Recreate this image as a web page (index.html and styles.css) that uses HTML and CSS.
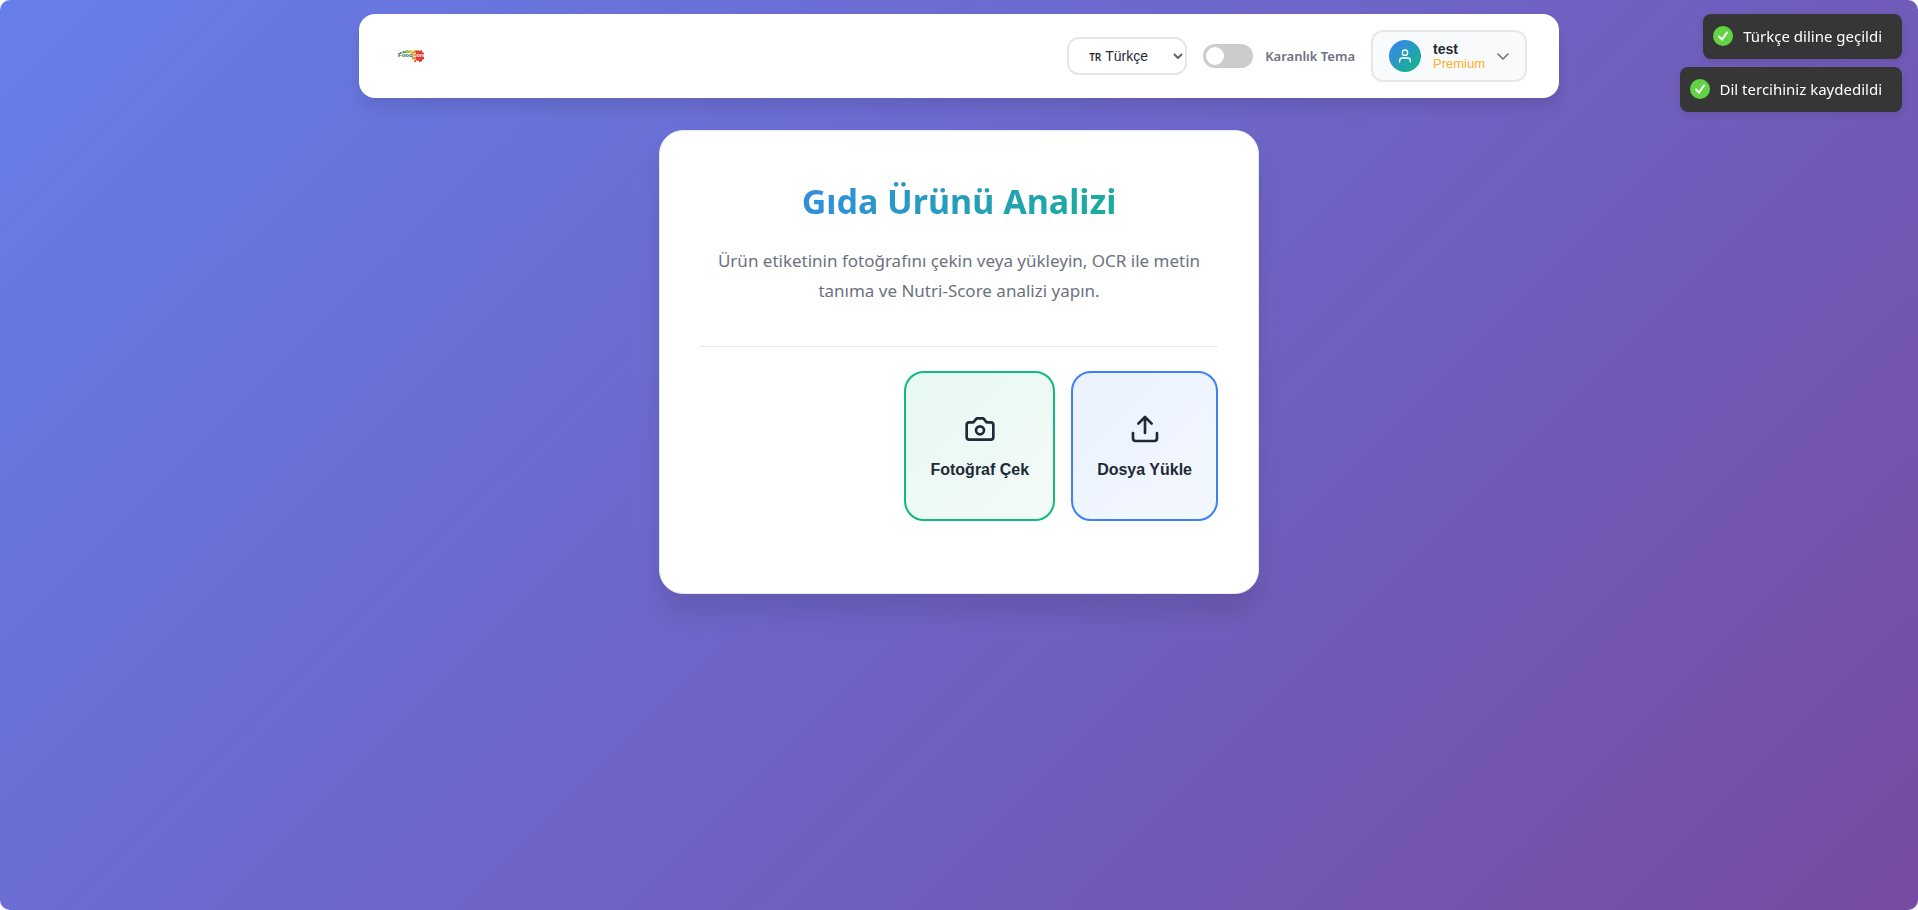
FILE: index.html
```html
<!DOCTYPE html>
<html lang="tr">
<head>
<meta charset="utf-8">
<meta name="viewport" content="width=device-width, initial-scale=1">
<title>Gıda Ürünü Analizi</title>
<link rel="stylesheet" href="styles.css">
</head>
<body>
<div class="app">
  <header class="header">
    <a class="logo" href="#" aria-label="FoodCore">
      <svg width="28" height="16" viewBox="0 -1 28 16">
        <path d="M2 4V3l2 .5L5 2l2 .5L9 1l2 1 2-1v3H2z" fill="#3f9b3a"/>
        <path d="M8 4V2l2-1 1 1.500 2-1.200 1 1V4H8z" fill="#a5cf3a"/>
        <path d="M12 4V1h1.500v1l1.500-.5V4h-3z" fill="#f8cc3c"/>
        <path d="M14 4l2-2.500 2-.5 2 .5V10l-2 2-1-2-3 .5z" fill="#f28a35"/>
        <path d="M18 4V2l2-.5 2 .5 2-1v2l2 1v6l-2 1v1.500h-1.500V13H21v-1.500l-2 .5-1-2z" fill="#e23a34"/>
        <path d="M16 11h2v2l-1 .5-1-1z" fill="#ec6b3a"/>
        <text class="logo-food" x="0" y="8">Food</text>
        <text class="logo-core" x="14" y="8">Core</text>
      </svg>
    </a>
    <div class="controls">
      <div class="language">
        <span class="language-code">TR</span>
        <select class="language-select" aria-label="Dil">
          <option>Türkçe</option>
          <option>English</option>
        </select>
        <svg class="language-arrow" width="10" height="6" viewBox="0 0 10 6" fill="none" stroke="currentColor" stroke-width="2"><path d="m1 1 4 4 4-4"/></svg>
      </div>
      <label class="theme">
        <input class="switch" type="checkbox">
        <span>Karanlık Tema</span>
      </label>
      <button class="user" type="button">
        <span class="avatar">
          <svg width="16" height="16" viewBox="0 0 24 24" fill="none" stroke="currentColor" stroke-width="2" stroke-linecap="round" stroke-linejoin="round"><path d="M20 21v-2a4 4 0 0 0-4-4H8a4 4 0 0 0-4 4v2"/><circle cx="12" cy="7" r="4"/></svg>
        </span>
        <span class="user-text">
          <span class="user-name">test</span>
          <span class="user-plan">Premium</span>
        </span>
        <svg class="chevron" width="12" height="8" viewBox="0 0 12 8" fill="none" stroke="currentColor" stroke-width="1.500" stroke-linecap="round" stroke-linejoin="round"><path d="m1 2 5 5 5-5"/></svg>
      </button>
    </div>
  </header>

  <main class="card">
    <div class="intro">
      <h1 class="title">Gıda Ürünü Analizi</h1>
      <p class="lead">Ürün etiketinin fotoğrafını çekin veya yükleyin, OCR ile metin tanıma ve Nutri-Score analizi yapın.</p>
    </div>
    <div class="actions">
      <button class="action action-photo" type="button">
        <svg width="32" height="32" viewBox="0 0 24 24" fill="none" stroke="currentColor" stroke-width="2" stroke-linecap="round" stroke-linejoin="round"><path d="M14.500 4h-5L7 7H4a2 2 0 0 0-2 2v9a2 2 0 0 0 2 2h16a2 2 0 0 0 2-2V9a2 2 0 0 0-2-2h-3l-2.500-3z"/><circle cx="12" cy="13" r="3"/></svg>
        <span>Fotoğraf Çek</span>
      </button>
      <button class="action action-upload" type="button">
        <svg width="32" height="32" viewBox="0 0 24 24" fill="none" stroke="currentColor" stroke-width="2" stroke-linecap="round" stroke-linejoin="round"><path d="M21 15v4a2 2 0 0 1-2 2H5a2 2 0 0 1-2-2v-4M17 8l-5-5-5 5M12 3v12"/></svg>
        <span>Dosya Yükle</span>
      </button>
    </div>
  </main>
</div>

<div class="toasts" role="status">
  <div class="toast">
    <svg width="20" height="20" viewBox="0 0 20 20"><circle cx="10" cy="10" r="10" fill="#61d345"/><path d="m6 10.500 3 3 5-7" fill="none" stroke="#fff" stroke-width="2" stroke-linecap="round"/></svg>
    <span>Türkçe diline geçildi</span>
  </div>
  <div class="toast">
    <svg width="20" height="20" viewBox="0 0 20 20"><circle cx="10" cy="10" r="10" fill="#61d345"/><path d="m6 10.500 3 3 5-7" fill="none" stroke="#fff" stroke-width="2" stroke-linecap="round"/></svg>
    <span>Dil tercihiniz kaydedildi</span>
  </div>
</div>
</body>
</html>
```

FILE: styles.css
```css
* {
  box-sizing: border-box;
}

html {
  background: #fff;
}

body {
  margin: 0;
  color: #1f2937;
  font-family: "Segoe UI", "Noto Sans", sans-serif;
}

.app {
  display: flex;
  flex-direction: column;
  align-items: center;
  gap: 32px;
  min-height: 100vh;
  padding: 14px 16px;
  border-radius: 10px;
  background: linear-gradient(135deg, #667eea 0%, #764ba2 100%);
}

.header {
  display: flex;
  align-items: center;
  justify-content: space-between;
  width: 100%;
  max-width: 1200px;
  padding: 16px 32px 16px 39px;
  border-radius: 16px;
  background: #fff;
  box-shadow: 0 10px 15px rgba(0, 0, 0, 0.1);
}

.logo {
  display: flex;
}

.logo-food,
.logo-core {
  font: bold 6px "Liberation Sans", sans-serif;
}

.logo-food {
  fill: #17633c;
}

.logo-core {
  fill: #fff;
}

.controls {
  display: flex;
  align-items: center;
  gap: 16px;
}

.language {
  position: relative;
}

.language-code {
  position: absolute;
  top: 14px;
  left: 22px;
  font-size: 10px;
  font-weight: 600;
  line-height: 12px;
  pointer-events: none;
}

.language-select {
  display: block;
  width: 120px;
  height: 38px;
  padding: 0 16px 0 36px;
  border: 2px solid #e5e7eb;
  border-radius: 12px;
  background-color: #fff;
  color: #1f2937;
  font: 14px "Liberation Sans", sans-serif;
  appearance: none;
}

.language-arrow {
  position: absolute;
  top: 16px;
  right: 4px;
  color: #5f6368;
  pointer-events: none;
}

.theme {
  display: flex;
  align-items: center;
  gap: 12px;
  color: #6b7280;
  font-size: 13px;
  font-weight: 600;
}

.switch {
  display: flex;
  align-items: center;
  width: 50px;
  height: 24px;
  margin: 0;
  padding: 3px;
  border-radius: 12px;
  background: #ccc;
  appearance: none;
}

.switch::before {
  width: 18px;
  height: 18px;
  border-radius: 50%;
  background: #fff;
  content: "";
}

.switch:checked {
  justify-content: flex-end;
  background: #3b82f6;
}

.user {
  display: flex;
  align-items: center;
  gap: 12px;
  padding: 8px 16px;
  border: 2px solid #e5e7eb;
  border-radius: 12px;
  background: #f9fafb;
  font-family: "Liberation Sans", sans-serif;
}

.avatar {
  display: flex;
  align-items: center;
  justify-content: center;
  width: 32px;
  height: 32px;
  border-radius: 50%;
  background: linear-gradient(135deg, #3b82f6, #10b981);
  color: #fff;
}

.user-text {
  display: flex;
  flex-direction: column;
  text-align: left;
}

.user-name {
  color: #1f2937;
  font-size: 14px;
  font-weight: 600;
  line-height: 16px;
}

.user-plan {
  color: #fbb024;
  font-size: 13px;
  font-weight: 500;
  line-height: 14px;
}

.chevron {
  color: #6b7280;
}

.card {
  width: 100%;
  max-width: 600px;
  min-height: 464px;
  padding: 40px;
  border: 1px solid #e5e7eb;
  border-radius: 24px;
  background: #fff;
  box-shadow: 0 20px 25px rgba(0, 0, 0, 0.1);
}

.intro {
  padding-bottom: 40px;
  border-bottom: 1px solid #e5e7eb;
  text-align: center;
}

.title {
  margin: 0 0 15px;
  background: linear-gradient(135deg, #3b82f6, #10b981);
  background-clip: text;
  color: transparent;
  font-size: 34px;
  font-weight: 700;
  line-height: 60px;
}

.lead {
  margin: 0;
  color: #6b7280;
  font-size: 17px;
  line-height: 30px;
}

.actions {
  display: flex;
  justify-content: flex-end;
  gap: 16px;
  padding-top: 24px;
}

.action {
  display: flex;
  flex-direction: column;
  align-items: center;
  justify-content: center;
  gap: 16px;
  height: 150px;
  padding: 24px;
  border: 2px solid;
  border-radius: 20px;
  color: #1f2937;
  font: bold 16px "Liberation Sans", sans-serif;
}

.action-photo {
  border-color: #10b981;
  background: linear-gradient(135deg, #e7f8f2, #f3faf7);
}

.action-upload {
  border-color: #3b82f6;
  background: linear-gradient(135deg, #ebf2fe, #f3f7ff);
}

.toasts {
  position: fixed;
  top: 14px;
  right: 16px;
  display: flex;
  flex-direction: column;
  align-items: flex-end;
  gap: 8px;
}

.toast {
  display: flex;
  align-items: center;
  gap: 10px;
  height: 45px;
  padding: 0 20px 2px 10px;
  border-radius: 8px;
  background: #363636;
  color: #fff;
  font-size: 15px;
  box-shadow: 0 3px 10px rgba(0, 0, 0, 0.1);
}
```
